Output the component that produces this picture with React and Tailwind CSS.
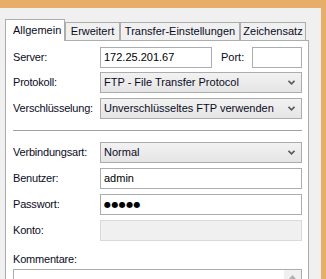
import React from "react";

const font = { fontFamily: '"Liberation Sans", Arial, sans-serif' };

function Chevron() {
  return (
    <svg width="7" height="5" viewBox="0 0 7 5" className="shrink-0">
      <path d="M0.5 0.8 L3.5 3.8 L6.5 0.8" fill="none" stroke="#5a5a5a" strokeWidth="1.6" />
    </svg>
  );
}

function Select({ value, className = "" }) {
  return (
    <div
      className={`h-[21px] flex items-center justify-between pl-[3px] pr-[6px] border border-[#acacac] bg-gradient-to-b from-[#f2f2f2] to-[#e5e5e5] text-[#0b0b24] ${className}`}
    >
      <span>{value}</span>
      <Chevron />
    </div>
  );
}

function Input({ value, className = "" }) {
  return (
    <div className={`h-[21px] flex items-center pl-[3px] border border-[#abadb3] bg-white text-black ${className}`}>
      {value}
    </div>
  );
}

function Row({ label, children, className = "" }) {
  return (
    <div className={`flex items-center ${className}`}>
      <div className="w-[87px] shrink-0 text-[#0b0b24] tracking-[-0.2px]">{label}</div>
      <div className="flex-1 flex items-center">{children}</div>
    </div>
  );
}

export default function App() {
  return (
    <div className="w-[326px] h-[279px] overflow-hidden bg-[#e6ae68] pt-2 pr-[5px] text-[11px] leading-[13px]" style={font}>
      <div className="h-full bg-[#f0f0f0] pl-[5px] pr-[12px] pt-[11px]">
        <div className="relative z-10 flex items-end h-[21px]">
          <div className="h-[22px] -mb-px w-[60px] shrink-0 border border-b-0 border-[#adadad] bg-white flex items-center pl-[7px] text-[#0b0b24]">
            Allgemein
          </div>
          <div className="h-[18px] w-[55px] shrink-0 border border-b-0 border-[#adadad] bg-[#f0f0f0] flex items-center justify-center text-[#0b0b24]">
            Erweitert
          </div>
          <div className="h-[18px] w-[120px] shrink-0 border border-b-0 border-[#adadad] bg-[#f0f0f0] flex items-center justify-center text-[#0b0b24]">
            Transfer-Einstellungen
          </div>
          <div className="h-[18px] w-[66px] shrink-0 border border-b-0 border-[#adadad] bg-[#f0f0f0] flex items-center justify-center text-[#0b0b24]">
            Zeichensatz
          </div>
        </div>
        <div className="w-[304px] h-[260px] border border-[#adadad] bg-white pl-[7px] pr-[6px]">
          <Row label="Server:" className="mt-[6px]">
            <Input value="172.25.201.67" className="w-[112px]" />
            <span className="ml-[9px] w-[31px] text-[#0b0b24]">Port:</span>
            <Input value="" className="w-[50px]" />
          </Row>
          <Row label="Protokoll:" className="mt-[4px]">
            <Select value="FTP - File Transfer Protocol" className="flex-1" />
          </Row>
          <Row label="Verschlüsselung:" className="mt-[5px]">
            <Select value="Unverschlüsseltes FTP verwenden" className="flex-1" />
          </Row>
          <div className="mt-[11px] h-px bg-[#a0a0a0]" />
          <Row label="Verbindungsart:" className="mt-[11px]">
            <Select value="Normal" className="flex-1" />
          </Row>
          <Row label="Benutzer:" className="mt-[5px]">
            <Input value="admin" className="flex-1" />
          </Row>
          <Row label="Passwort:" className="mt-[5px]">
            <Input
              value={
                <span className="text-[8px] tracking-[0.4px]" style={{ fontFamily: '"DejaVu Sans", sans-serif' }}>
                  ●●●●●
                </span>
              }
              className="flex-1"
            />
          </Row>
          <Row label="Konto:" className="mt-[5px]">
            <div className="h-[21px] flex-1 border border-[#d9d9d9] bg-[#f0f0f0]" />
          </Row>
          <div className="mt-[12px] text-[#0b0b24] tracking-[-0.2px]">Kommentare:</div>
          <div className="mt-[3px] h-[30px] border border-[#abadb3] bg-white flex justify-end">
            <div className="w-[17px] h-full bg-[#f0f0f0] flex justify-center pt-[5px]">
              <svg width="7" height="4" viewBox="0 0 7 4">
                <path d="M0 4 L3.5 0 L7 4 Z" fill="#b0b0b0" />
              </svg>
            </div>
          </div>
        </div>
      </div>
    </div>
  );
}
